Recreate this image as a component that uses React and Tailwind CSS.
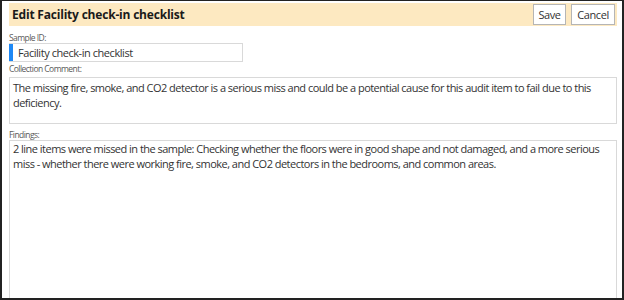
import React from 'react';

const font = { fontFamily: '"Open Sans", "Noto Sans", sans-serif' };

function Label({ children, className = '' }) {
  return (
    <div className={`text-[8.5px] leading-[10px] tracking-[-0.55px] text-[#595959] ${className}`}>{children}</div>
  );
}

function Box({ lines, className = '' }) {
  return (
    <div className={`overflow-hidden border border-[#d9d9d9] bg-white pl-[3px] text-[11px] leading-[15px] tracking-[-0.52px] text-[#333] ${className}`}>
      {lines.map((l, i) => (
        <div key={i} className="whitespace-nowrap">{l}</div>
      ))}
    </div>
  );
}

export default function App() {
  return (
    <div className="h-[300px] w-[624px] overflow-hidden bg-white" style={font}>
      <div className="h-full overflow-hidden border-t border-b-2 border-x-2 border-[#222] pl-[7px] pr-[5px] pt-[2px]">
        <div className="flex h-[23px] items-center justify-between bg-[#fde9c1] pl-[3px] pr-[2px]">
          <h1 className="text-[12px] font-bold leading-none tracking-[-0.2px] text-[#1a1a1a]">Edit Facility check-in checklist</h1>
          <div className="flex gap-[5px]">
            <button className="h-[21px] w-[33px] border border-[#b5b5b5] bg-white text-[11px] leading-none tracking-[-0.4px] text-[#333]">Save</button>
            <button className="h-[21px] w-[44px] border border-[#b5b5b5] bg-white text-[11px] leading-none tracking-[-0.4px] text-[#333]">Cancel</button>
          </div>
        </div>

        <Label className="mt-[7px]">Sample ID:</Label>
        <div className="flex h-[19px] w-[234px] border border-l-0 border-[#d9d9d9]">
          <div className="h-full w-[4px] shrink-0 bg-[#1e88f5]" />
          <span className="pl-[5px] pt-[2px] text-[11px] leading-[13px] tracking-[-0.45px] text-[#333]">Facility check-in checklist</span>
        </div>

        <Label className="mt-[2px]">Collection Comment:</Label>
        <Box
          className="mt-[3px] h-[47px] pt-[2px]"
          lines={[
            'The missing fire, smoke, and CO2 detector is a serious miss and could be a potential cause for this audit item to fail due to this',
            'deficiency.',
          ]}
        />

        <Label className="mt-[6px]">Findings:</Label>
        <Box
          className="h-[200px] pt-0"
          lines={[
            '2 line items were missed in the sample: Checking whether the floors were in good shape and not damaged, and a more serious',
            'miss - whether there were working fire, smoke, and CO2 detectors in the bedrooms, and common areas.',
          ]}
        />
      </div>
    </div>
  );
}
